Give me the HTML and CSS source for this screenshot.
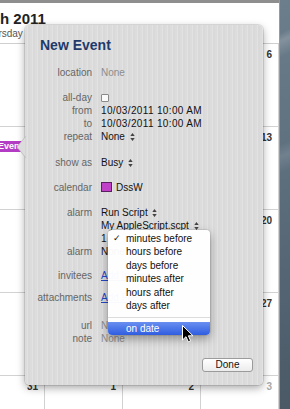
FILE: index.html
```html
<!DOCTYPE html>
<html lang="en">
<head>
  <meta charset="UTF-8">
  <meta name="viewport" content="width=device-width, initial-scale=1">
  <title>New Event</title>
  <link rel="stylesheet" href="styles.css">
</head>
<body>
  <div class="screen">
    <div class="cal">
      <div class="cal-top"></div>
      <div class="cal-head">
        <h1 class="month">March 2011</h1>
        <div class="weekdays">
          <span>Thursday</span><span>Friday</span><span>Saturday</span><span>Sunday</span>
        </div>
      </div>
      <div class="weeks">
        <div class="day"><span class="num">3</span></div>
        <div class="day"><span class="num">4</span></div>
        <div class="day"><span class="num">5</span></div>
        <div class="day"><span class="num">6</span></div>

        <div class="day">
          <span class="num">10</span>
          <div class="event">Event</div>
        </div>
        <div class="day"><span class="num">11</span></div>
        <div class="day"><span class="num">12</span></div>
        <div class="day"><span class="num">13</span></div>

        <div class="day"><span class="num">17</span></div>
        <div class="day"><span class="num">18</span></div>
        <div class="day"><span class="num">19</span></div>
        <div class="day"><span class="num">20</span></div>

        <div class="day"><span class="num">24</span></div>
        <div class="day"><span class="num">25</span></div>
        <div class="day"><span class="num">26</span></div>
        <div class="day"><span class="num">27</span></div>

        <div class="day"><span class="num">31</span></div>
        <div class="day"><span class="num">1</span></div>
        <div class="day"><span class="num">2</span></div>
        <div class="day next"><span class="num">3</span></div>
      </div>
    </div>
    <div class="desktop"></div>

    <!-- event editor popover -->
    <div class="popover">
      <svg class="pointer" width="10" height="22" viewBox="0 0 10 22">
        <path d="M10 0 L1 11 L10 22 Z" fill="#dcdcdc" stroke="#b9b9b9" stroke-width="0.8"/>
        <path d="M10.5 0.5 V21.5" stroke="#dcdcdc" stroke-width="2"/>
      </svg>
      <h2 class="title">New Event</h2>

      <div class="form">
        <div class="row"><span class="lbl">location</span><span class="val muted">None</span></div>
        <div class="row gap-12"><span class="lbl">all-day</span><span class="val"><span class="check"></span></span></div>
        <div class="row"><span class="lbl">from</span><span class="val date">10/03/2011 10:00 AM</span></div>
        <div class="row"><span class="lbl">to</span><span class="val date">10/03/2011 10:00 AM</span></div>
        <div class="row"><span class="lbl">repeat</span><span class="val">None <svg class="pop" viewBox="0 0 5 9"><path d="M2.5 0 L5 3.4 H0Z M0 5.6 H5 L2.5 9Z"/></svg></span></div>
        <div class="row gap-13"><span class="lbl">show as</span><span class="val">Busy <svg class="pop" viewBox="0 0 5 9"><path d="M2.5 0 L5 3.4 H0Z M0 5.6 H5 L2.5 9Z"/></svg></span></div>
        <div class="row gap-12"><span class="lbl">calendar</span><span class="val"><span class="swatch"></span>DssW</span></div>
        <div class="row gap-12"><span class="lbl">alarm</span><span class="val">Run Script <svg class="pop" viewBox="0 0 5 9"><path d="M2.5 0 L5 3.4 H0Z M0 5.6 H5 L2.5 9Z"/></svg></span></div>
        <div class="row"><span class="lbl"></span><span class="val">My AppleScript.scpt <svg class="pop" viewBox="0 0 5 9"><path d="M2.5 0 L5 3.4 H0Z M0 5.6 H5 L2.5 9Z"/></svg></span></div>
        <div class="row"><span class="lbl"></span><span class="val">1</span></div>
        <div class="row"><span class="lbl">alarm</span><span class="val">None</span></div>
        <div class="row gap-11"><span class="lbl">invitees</span><span class="val"><a class="link">Add Invitees…</a></span></div>
        <div class="row gap-9"><span class="lbl">attachments</span><span class="val"><a class="link">Add File…</a></span></div>
        <div class="row gap-15"><span class="lbl">url</span><span class="val muted">None</span></div>
        <div class="row"><span class="lbl">note</span><span class="val muted">None</span></div>
      </div>

      <div class="actions">
        <button class="btn">Done</button>
      </div>

      <div class="menu">
        <div class="item"><span class="tick">✓</span>minutes before</div>
        <div class="item">hours before</div>
        <div class="item">days before</div>
        <div class="item">minutes after</div>
        <div class="item">hours after</div>
        <div class="item">days after</div>
        <div class="sep"></div>
        <div class="item active">on date</div>
      </div>

      <svg class="cursor" width="12" height="18" viewBox="0 0 12 18">
        <path d="M0.5 0.5 V15 L4 11.7 L6.3 16.8 L8.6 15.8 L6.4 10.8 H11 Z" fill="#000" stroke="#fff" stroke-width="1"/>
      </svg>
    </div>
  </div>
</body>
</html>
```

FILE: styles.css
```css
/* Base */
body {
  margin: 0;
  font-family: "Liberation Sans", Arial, sans-serif;
  font-size: 10px;
  color: #111;
  background: #56687a;
}
.screen {
  position: relative;
  display: flex;
  width: 290px;
  height: 409px;
  overflow: hidden;
}

/* Calendar behind the popover */
.cal {
  width: 279px;
  background: #fff;
  border-right: 1px solid #9a9a9a;
  overflow: hidden;
}
.cal-top {
  height: 3px;
  background: #8e8e8e;
}
.cal-head {
  height: 40px;
  border-bottom: 1px solid #cfcfcf;
}
.month {
  margin: 0 0 0 -35px;
  padding-top: 7px;
  height: 19px;
  font-size: 15px;
  line-height: 17px;
  font-weight: bold;
  color: #222;
  white-space: nowrap;
}
.weekdays {
  display: grid;
  grid-template-columns: 78px 78px 78px 78px;
  margin-left: -37px;
  color: #555;
  font-size: 10px;
  line-height: 10px;
}
.weekdays span {
  text-align: center;
}
.weeks {
  display: grid;
  grid-template-columns: 78px 78px 78px 78px;
  grid-auto-rows: 83px;
  margin-left: -33px;
}
.day {
  position: relative;
  border-right: 1px solid #d2d2d2;
  border-bottom: 1px solid #d2d2d2;
  box-sizing: border-box;
  padding: 5px 6px 0 0;
  text-align: right;
}
.num {
  font-size: 10px;
  font-weight: bold;
  color: #333;
}
.day.next .num {
  color: #aaa;
}
.event {
  margin-top: -2px;
  height: 11px;
  line-height: 11px;
  background: #b43cc4;
  color: #fff;
  font-weight: bold;
  font-size: 9px;
  text-align: left;
  padding-left: 31px;
  border-radius: 2px;
  white-space: nowrap;
  overflow: hidden;
}

.desktop {
  flex: 1;
  background:
    linear-gradient(155deg, transparent 8%, rgba(255,255,255,0.18) 10%, transparent 14%),
    linear-gradient(160deg, transparent 35%, rgba(255,255,255,0.12) 38%, transparent 42%),
    linear-gradient(180deg, #6c7d8b 0%, #5c6d7c 45%, #4b5966 100%);
}

/* Popover */
.popover {
  position: absolute;
  left: 25px;
  top: 25px;
  width: 238px;
  box-sizing: border-box;
  padding: 11px 0 13px;
  border-radius: 5px;
  background: repeating-linear-gradient(90deg, #dcdcdc 0 2px, #e2e2e2 2px 3px, #d9d9d9 3px 5px);
  box-shadow: 0 0 0 1px rgba(0,0,0,0.1), 0 3px 9px rgba(0,0,0,0.35);
}
.pointer {
  position: absolute;
  left: -9px;
  top: 111px;
}
.title {
  margin: 0 0 12px 15px;
  font-size: 14px;
  line-height: 18px;
  font-weight: bold;
  color: #1e3a6c;
}
.row {
  display: grid;
  grid-template-columns: 67px 1fr;
  column-gap: 9px;
  height: 13px;
  line-height: 13px;
  white-space: nowrap;
}
.gap-9 { margin-top: 9px; }
.gap-11 { margin-top: 11px; }
.gap-12 { margin-top: 12px; }
.gap-13 { margin-top: 13px; }
.gap-15 { margin-top: 15px; }
.lbl {
  text-align: right;
  color: #666;
}
.val {
  color: #111;
}
.val.date {
  letter-spacing: 0.35px;
}
.val.muted {
  color: #8c8c8c;
}
.pop {
  width: 5px;
  height: 8px;
  margin-left: 2px;
  fill: #444;
  vertical-align: -1px;
}
.check {
  display: inline-block;
  width: 6px;
  height: 6px;
  border: 1px solid #8a8a8a;
  border-radius: 1px;
  background: #fafafa;
  vertical-align: -1px;
}
.swatch {
  display: inline-block;
  width: 9px;
  height: 8px;
  margin-right: 4px;
  background: #c040c8;
  border: 1px solid #5a2060;
  vertical-align: -1px;
}
.link {
  color: #2446c6;
  text-decoration: underline;
}

.actions {
  display: flex;
  justify-content: flex-end;
  margin-top: 13px;
  padding-right: 10px;
}
.btn {
  width: 51px;
  height: 14px;
  padding: 0;
  font-family: inherit;
  font-size: 10px;
  line-height: 12px;
  color: #111;
  border: 1px solid #9b9b9b;
  border-radius: 3px;
  background: linear-gradient(#ffffff, #ececec);
}

/* Popup menu */
.menu {
  position: absolute;
  left: 83px;
  top: 205px;
  width: 102px;
  padding-top: 2px;
  background: rgba(255,255,255,0.97);
  border-radius: 4px;
  box-shadow: 0 0 0 1px rgba(0,0,0,0.08), 0 4px 10px rgba(0,0,0,0.35);
  overflow: hidden;
}
.item {
  position: relative;
  height: 13.4px;
  line-height: 13.4px;
  padding-left: 18px;
  color: #111;
}
.tick {
  position: absolute;
  left: 5px;
  font-family: "DejaVu Sans", sans-serif;
  font-size: 9px;
}
.sep {
  height: 1px;
  margin: 5px 0 4px;
  background: #dcdcdc;
}
.item.active {
  height: 13px;
  line-height: 13px;
  color: #fff;
  background: linear-gradient(#6a8ff0, #2f5de0);
}
.cursor {
  position: absolute;
  left: 157px;
  top: 300px;
}
```
